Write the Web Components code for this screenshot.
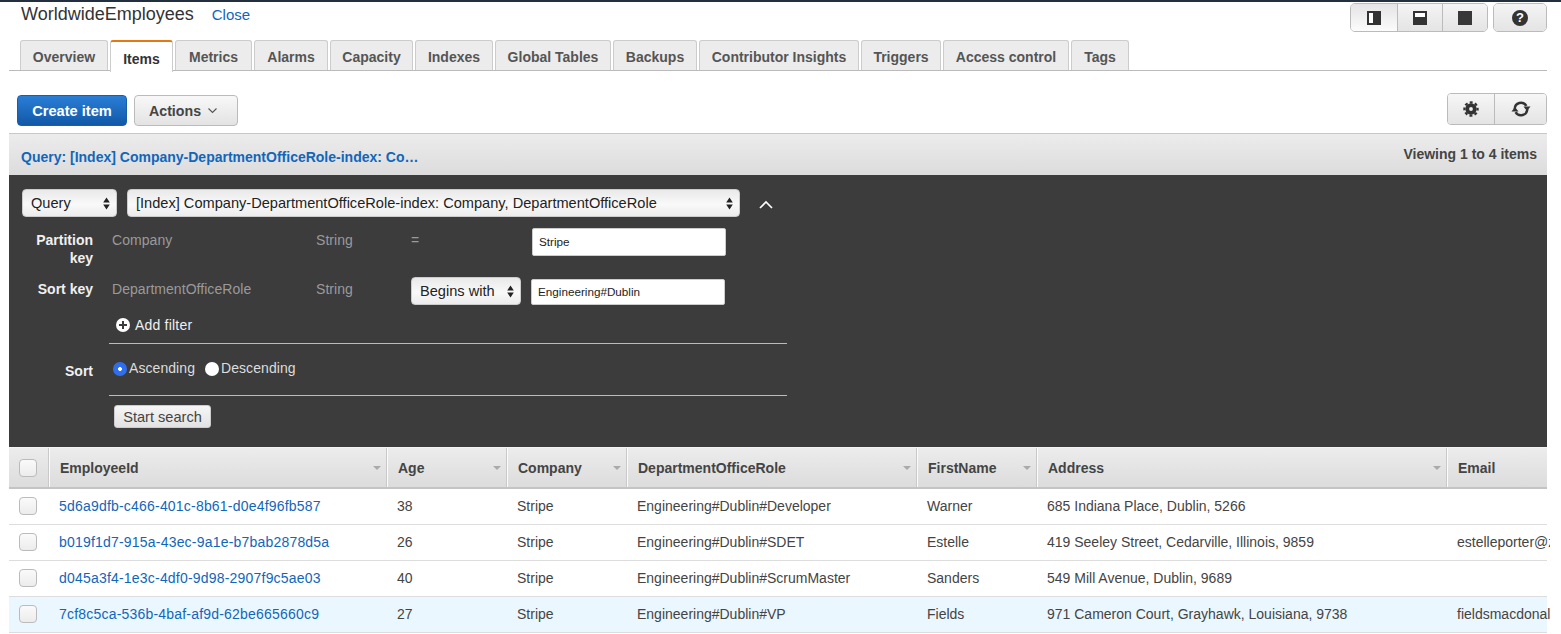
<!DOCTYPE html>
<html>
<head>
<meta charset="utf-8">
<title>WorldwideEmployees</title>
<style>
  html, body { margin: 0; padding: 0; background: #fff; }
  body { font-family: "Liberation Sans", Arial, sans-serif; font-size: 14px; color: #444; width: 1561px; height: 634px; overflow: hidden; }
</style>
</head>
<body>
<table-page>
  <title-bar name="WorldwideEmployees"></title-bar>
  <tab-strip>
    <tab-item style="width:88px">Overview</tab-item>
    <tab-item style="width:63px" active>Items</tab-item>
    <tab-item style="width:77px">Metrics</tab-item>
    <tab-item style="width:74px">Alarms</tab-item>
    <tab-item style="width:83px">Capacity</tab-item>
    <tab-item style="width:78px">Indexes</tab-item>
    <tab-item style="width:116px">Global Tables</tab-item>
    <tab-item style="width:84px">Backups</tab-item>
    <tab-item style="width:160px">Contributor Insights</tab-item>
    <tab-item style="width:80px">Triggers</tab-item>
    <tab-item style="width:126px">Access control</tab-item>
    <tab-item style="width:58px">Tags</tab-item>
  </tab-strip>
  <action-bar></action-bar>
  <query-header></query-header>
  <query-panel></query-panel>
  <items-table></items-table>
</table-page>

<script>
class TablePage extends HTMLElement {
  constructor() {
    super();
    this.attachShadow({mode: "open"}).innerHTML = `
      <style>
        :host { display: block; }
        .top { height: 2px; background: #232f3e; }
      </style>
      <div class="top"></div>
      <slot></slot>`;
  }
}
customElements.define("table-page", TablePage);

class TitleBar extends HTMLElement {
  constructor() {
    super();
    this.attachShadow({mode: "open"}).innerHTML = `
      <style>
        :host { display: flex; justify-content: space-between; height: 38px; padding: 0 14px 0 21px; }
        .left { display: flex; align-items: baseline; gap: 18px; padding-top: 1px; line-height: 22px; }
        .name { font-size: 18px; color: #333; }
        a { font-size: 15px; color: #1166bb; text-decoration: none; }
        .right { display: flex; gap: 5px; padding-top: 1px; }
        .group { display: flex; height: 29px; border: 1px solid #bbb; border-radius: 5px; overflow: hidden; box-sizing: border-box; }
        .group span { width: 45px; display: flex; align-items: center; justify-content: center; background: linear-gradient(#f4f4f4, #e4e4e4); border-left: 1px solid #bbb; box-sizing: border-box; }
        .group span:first-child { width: 46px; border-left: 0; background: linear-gradient(#e4e4e4, #fcfcfc); }
        .help span:first-child { width: 52px; background: linear-gradient(#f4f4f4, #e4e4e4); }
        svg { display: block; }
        .q { width: 16px; height: 16px; border-radius: 50%; background: #333; color: #fff; font: bold 13px/16px "Liberation Sans", sans-serif; text-align: center; }
      </style>
      <div class="left"><span class="name"></span><a>Close</a></div>
      <div class="right">
        <div class="group">
          <span><svg width="14" height="14"><rect width="14" height="14" fill="#333"/><rect x="2" y="2" width="4" height="10" fill="#fff"/></svg></span>
          <span><svg width="14" height="14"><rect width="14" height="14" fill="#333"/><rect x="2" y="2" width="10" height="4" fill="#fff"/></svg></span>
          <span><svg width="14" height="14"><rect width="14" height="14" fill="#383838"/></svg></span>
        </div>
        <div class="group help"><span><div class="q">?</div></span></div>
      </div>`;
    this.shadowRoot.querySelector(".name").textContent = this.getAttribute("name");
  }
}
customElements.define("title-bar", TitleBar);

class TabStrip extends HTMLElement {
  constructor() {
    super();
    this.attachShadow({mode: "open"}).innerHTML = `
      <style>
        :host { display: flex; gap: 2px; margin: 0 14px 0 9px; padding-left: 11px; height: 30px; border-bottom: 1px solid #bbb; }
      </style>
      <slot></slot>`;
  }
}
customElements.define("tab-strip", TabStrip);

class TabItem extends HTMLElement {
  constructor() {
    super();
    this.attachShadow({mode: "open"}).innerHTML = `
      <style>
        :host { display: block; flex: none; box-sizing: border-box; height: 30px; text-align: center; white-space: nowrap; font-weight: bold; font-size: 14px; line-height: 33px; color: #555;
          background: #ececec; border: 1px solid #ccc; border-bottom: 0; border-radius: 3px 3px 0 0; }
        :host([active]) { height: 32px; background: #fff; color: #333; border-top: 2px solid #e47911; line-height: 34px; }
      </style>
      <slot></slot>`;
  }
}
customElements.define("tab-item", TabItem);

class ActionBar extends HTMLElement {
  constructor() {
    super();
    this.attachShadow({mode: "open"}).innerHTML = `
      <style>
        :host { display: flex; justify-content: space-between; align-items: flex-start; height: 62px; padding: 22px 14px 0 17px; box-sizing: border-box; }
        .left { display: flex; gap: 7px; padding-top: 2px; }
        button { font: bold 14.6px "Liberation Sans", sans-serif; height: 31px; border-radius: 4px; padding: 0; box-sizing: border-box; }
        .create { width: 110px; color: #fff; background: linear-gradient(#2a7ed6, #1158a7); border: 1px solid #1a5ea8; }
        .actions { width: 104px; padding-left: 14px; color: #444; background: linear-gradient(#f8f8f8, #e3e3e3); border: 1px solid #bbb; display: flex; align-items: center; gap: 7px; font-size: 14.2px; }
        .right { display: flex; width: 100px; height: 32px; border: 1px solid #bbb; border-radius: 4px; overflow: hidden; box-sizing: border-box; }
        .right span { flex: 1; display: flex; align-items: center; justify-content: center; background: linear-gradient(#f6f6f6, #e4e4e4); }
        .right span + span { flex: 0 0 51px; border-left: 1px solid #bbb; }
      </style>
      <div class="left">
        <button class="create">Create item</button>
        <button class="actions">Actions <svg width="9" height="6"><polyline points="0.5,0.5 4.5,4.5 8.5,0.5" fill="none" stroke="#555" stroke-width="1.1"/></svg></button>
      </div>
      <div class="right">
        <span><svg width="16" height="16" viewBox="0 0 16 16">
          <circle cx="8" cy="8" r="3.8" fill="none" stroke="#333" stroke-width="3.8"/>
          <circle cx="8" cy="8" r="6.6" fill="none" stroke="#333" stroke-width="2.2" stroke-dasharray="2.9 2.28" stroke-dashoffset="1.45"/>
        </svg></span>
        <span><svg width="20" height="18" viewBox="0 0 20 18">
          <path d="M3.7 9A6.3 6.3 0 0 1 15.4 5.8" fill="none" stroke="#333" stroke-width="2.4"/>
          <path d="M12.5 6.5H19.5L16 11z" fill="#333"/>
          <path d="M16.3 9A6.3 6.3 0 0 1 4.6 12.2" fill="none" stroke="#333" stroke-width="2.4"/>
          <path d="M7.5 11.5H0.5L4 7z" fill="#333"/>
        </svg></span>
      </div>`;
  }
}
customElements.define("action-bar", ActionBar);

class QueryHeader extends HTMLElement {
  constructor() {
    super();
    this.attachShadow({mode: "open"}).innerHTML = `
      <style>
        :host { display: flex; justify-content: space-between; margin: 0 14px 0 9px; height: 42px; box-sizing: border-box; padding: 0 10px 0 12px;
          background: linear-gradient(#ececec, #dcdcdc); border-top: 1px solid #c8c8c8; font-size: 14px; font-weight: bold; }
        a { color: #1166bb; line-height: 47px; }
        span { color: #444; line-height: 40px; }
      </style>
      <a>Query: [Index] Company-DepartmentOfficeRole-index: Co…</a>
      <span>Viewing 1 to 4 items</span>`;
  }
}
customElements.define("query-header", QueryHeader);

class SelectBox extends HTMLElement {
  constructor() {
    super();
    this.attachShadow({mode: "open"}).innerHTML = `
      <style>
        :host { display: flex; align-items: center; justify-content: space-between; box-sizing: border-box; height: 28px; padding: 0 6px 0 8px; font-size: 14.6px; color: #222;
          background: linear-gradient(#e9e9e9, #f9f9f9 55%, #ececec); border: 1px solid #ccc; border-radius: 4px; white-space: nowrap; }
        svg { display: block; flex: none; }
      </style>
      <span><slot></slot></span>
      <svg width="7" height="13"><path d="M3.5 0.5L6.8 5.5H0.2zM3.5 12.5L0.2 7.5H6.8z" fill="#222"/></svg>`;
  }
}
customElements.define("select-box", SelectBox);

class TextBox extends HTMLElement {
  constructor() {
    super();
    this.attachShadow({mode: "open"}).innerHTML = `
      <style>
        :host { display: flex; align-items: center; box-sizing: border-box; width: 194px; height: 28px; padding: 0 6px; font-size: 11.7px; color: #222;
          background: #fff; border: 1px solid #ccc; border-radius: 2px; }
      </style>
      <slot></slot>`;
  }
}
customElements.define("text-box", TextBox);

class QueryPanel extends HTMLElement {
  constructor() {
    super();
    this.attachShadow({mode: "open"}).innerHTML = `
      <style>
        :host { display: block; margin: 0 14px 0 9px; height: 272px; padding-top: 14px; box-sizing: border-box; background: #3c3c3c; color: #eee; font-size: 14px; line-height: 18px; }
        .pick { display: flex; align-items: center; padding-left: 13px; gap: 10px; margin-bottom: 11px; }
        .pick svg { margin: 2px 0 0 9px; display: block; }
        .grid { display: grid; grid-template-columns: 103px 204px 95px 121px auto; justify-content: start; }
        .label { font-weight: bold; text-align: right; padding: 3px 19px 0 0; color: #f0f0f0; }
        .muted { color: #9a9a9a; padding-top: 3px; letter-spacing: .05px; }
        .r1 { height: 39px; margin-bottom: 10px; }
        .filter { display: flex; align-items: center; gap: 5px; padding-left: 107px; margin-top: 11px; height: 18px; color: #f0f0f0; letter-spacing: .2px; }
        .rule { margin: 9px 0 0 100px; width: 678px; height: 1px; background: #bbb; }
        .sort { display: flex; height: 51px; }
        .sort .label { width: 84px; padding: 18px 0 0 0; box-sizing: content-box; }
        .radios { display: flex; align-items: flex-start; padding: 15px 0 0 20px; color: #ddd; letter-spacing: .07px; }
        .radio { width: 14px; height: 14px; border-radius: 50%; background: #fff; margin: 3px 2px 0 0; flex: none; }
        .radio.on { background: radial-gradient(circle, #fff 0 1.6px, #2f6fee 2.2px); }
        .radios span + .radio { margin-left: 10px; }
        button { display: block; margin: 9px 0 0 105px; width: 97px; height: 23px; padding: 0; font: 14.6px "Liberation Sans", sans-serif; color: #444;
          background: linear-gradient(#f6f6f6, #e2e2e2); border: 1px solid #ccc; border-radius: 3px; }
        .rule.second { margin-top: 0; }
        select-box.op { width: 110px; }
        text-box.sk { height: 26px; margin: 2px 0 0 -1px; }
      </style>
      <div class="pick">
        <select-box style="width:95px">Query</select-box>
        <select-box style="width:613px">[Index] Company-DepartmentOfficeRole-index: Company, DepartmentOfficeRole</select-box>
        <svg width="14" height="9"><polyline points="1,8 7,2 13,8" fill="none" stroke="#fff" stroke-width="1.7"/></svg>
      </div>
      <div class="grid r1">
        <div class="label">Partition key</div>
        <div class="muted">Company</div>
        <div class="muted">String</div>
        <div class="muted">=</div>
        <text-box>Stripe</text-box>
      </div>
      <div class="grid">
        <div class="label">Sort key</div>
        <div class="muted">DepartmentOfficeRole</div>
        <div class="muted">String</div>
        <select-box class="op">Begins with</select-box>
        <text-box class="sk">Engineering#Dublin</text-box>
      </div>
      <div class="filter">
        <svg width="14" height="14" viewBox="0 0 14 14"><circle cx="7" cy="7" r="7" fill="#fff"/><path d="M6 3h2v3h3v2H8v3H6V8H3V6h3z" fill="#3c3c3c"/></svg>
        <span>Add filter</span>
      </div>
      <div class="rule"></div>
      <div class="sort">
        <div class="label">Sort</div>
        <div class="radios">
          <div class="radio on"></div><span>Ascending</span>
          <div class="radio"></div><span>Descending</span>
        </div>
      </div>
      <div class="rule second"></div>
      <button>Start search</button>`;
  }
}
customElements.define("query-panel", QueryPanel);

const COLUMNS = [
  ["EmployeeId", 338], ["Age", 120], ["Company", 120], ["DepartmentOfficeRole", 290],
  ["FirstName", 120], ["Address", 410], ["Email", 103]
];
const ROWS = [
  ["5d6a9dfb-c466-401c-8b61-d0e4f96fb587", "38", "Stripe", "Engineering#Dublin#Developer", "Warner", "685 Indiana Place, Dublin, 5266", ""],
  ["b019f1d7-915a-43ec-9a1e-b7bab2878d5a", "26", "Stripe", "Engineering#Dublin#SDET", "Estelle", "419 Seeley Street, Cedarville, Illinois, 9859", "estelleporter@zaggles.com"],
  ["d045a3f4-1e3c-4df0-9d98-2907f9c5ae03", "40", "Stripe", "Engineering#Dublin#ScrumMaster", "Sanders", "549 Mill Avenue, Dublin, 9689", ""],
  ["7cf8c5ca-536b-4baf-af9d-62be665660c9", "27", "Stripe", "Engineering#Dublin#VP", "Fields", "971 Cameron Court, Grayhawk, Louisiana, 9738", "fieldsmacdonald@zaggles.com"]
];

class ItemsTable extends HTMLElement {
  constructor() {
    super();
    const head = COLUMNS.map(([name, w], i) => `
      <div class="th" style="width:${w}px">${name}${i < 6 ? '<svg width="8" height="4"><path d="M0 0h8L4 4z" fill="#aaa"/></svg>' : ""}</div>`).join("");
    const rows = ROWS.map((r, n) => `
      <div class="row${n == 3 ? " sel" : ""}">
        <div class="chk"><i></i></div>
        ${r.map((v, i) => `<div class="td" style="width:${COLUMNS[i][1]}px">${i == 0 ? `<a>${v}</a>` : v}</div>`).join("")}
      </div>`).join("");
    this.attachShadow({mode: "open"}).innerHTML = `
      <style>
        :host { display: block; margin-left: 9px; width: 1538px; font-size: 14px; color: #444; }
        .head, .row { display: flex; }
        .head { height: 42px; box-sizing: border-box; background: linear-gradient(#ececec, #dcdcdc); border-top: 1px solid #f4f4f4; border-bottom: 2px solid #c4c4c4; overflow: hidden; }
        .th { flex: none; box-sizing: border-box; display: flex; align-items: center; justify-content: space-between; padding: 0 6px 0 10px; font-weight: bold; color: #444; border-left: 1px solid #fbfbfb; box-shadow: -1px 0 #c9c9c9; }
        .row { height: 36px; box-sizing: border-box; border-bottom: 1px solid #ddd; padding-bottom: 2px; align-items: center; }
        .row.sel { background: #ebf7fe; }
        .chk { flex: none; width: 40px; box-sizing: border-box; padding-left: 10px; display: flex; align-items: center; }
        .chk i { display: block; width: 18px; height: 18px; box-sizing: border-box; border: 1px solid #bbb; border-radius: 4px; background: linear-gradient(#fafafa, #ececec); }
        .td { flex: none; box-sizing: border-box; padding-left: 10px; white-space: nowrap; overflow: hidden; }
        a { color: #1166bb; letter-spacing: .2px; }
      </style>
      <div class="head"><div class="chk"><i></i></div>${head}</div>
      ${rows}`;
  }
}
customElements.define("items-table", ItemsTable);
</script>
</body>
</html>
